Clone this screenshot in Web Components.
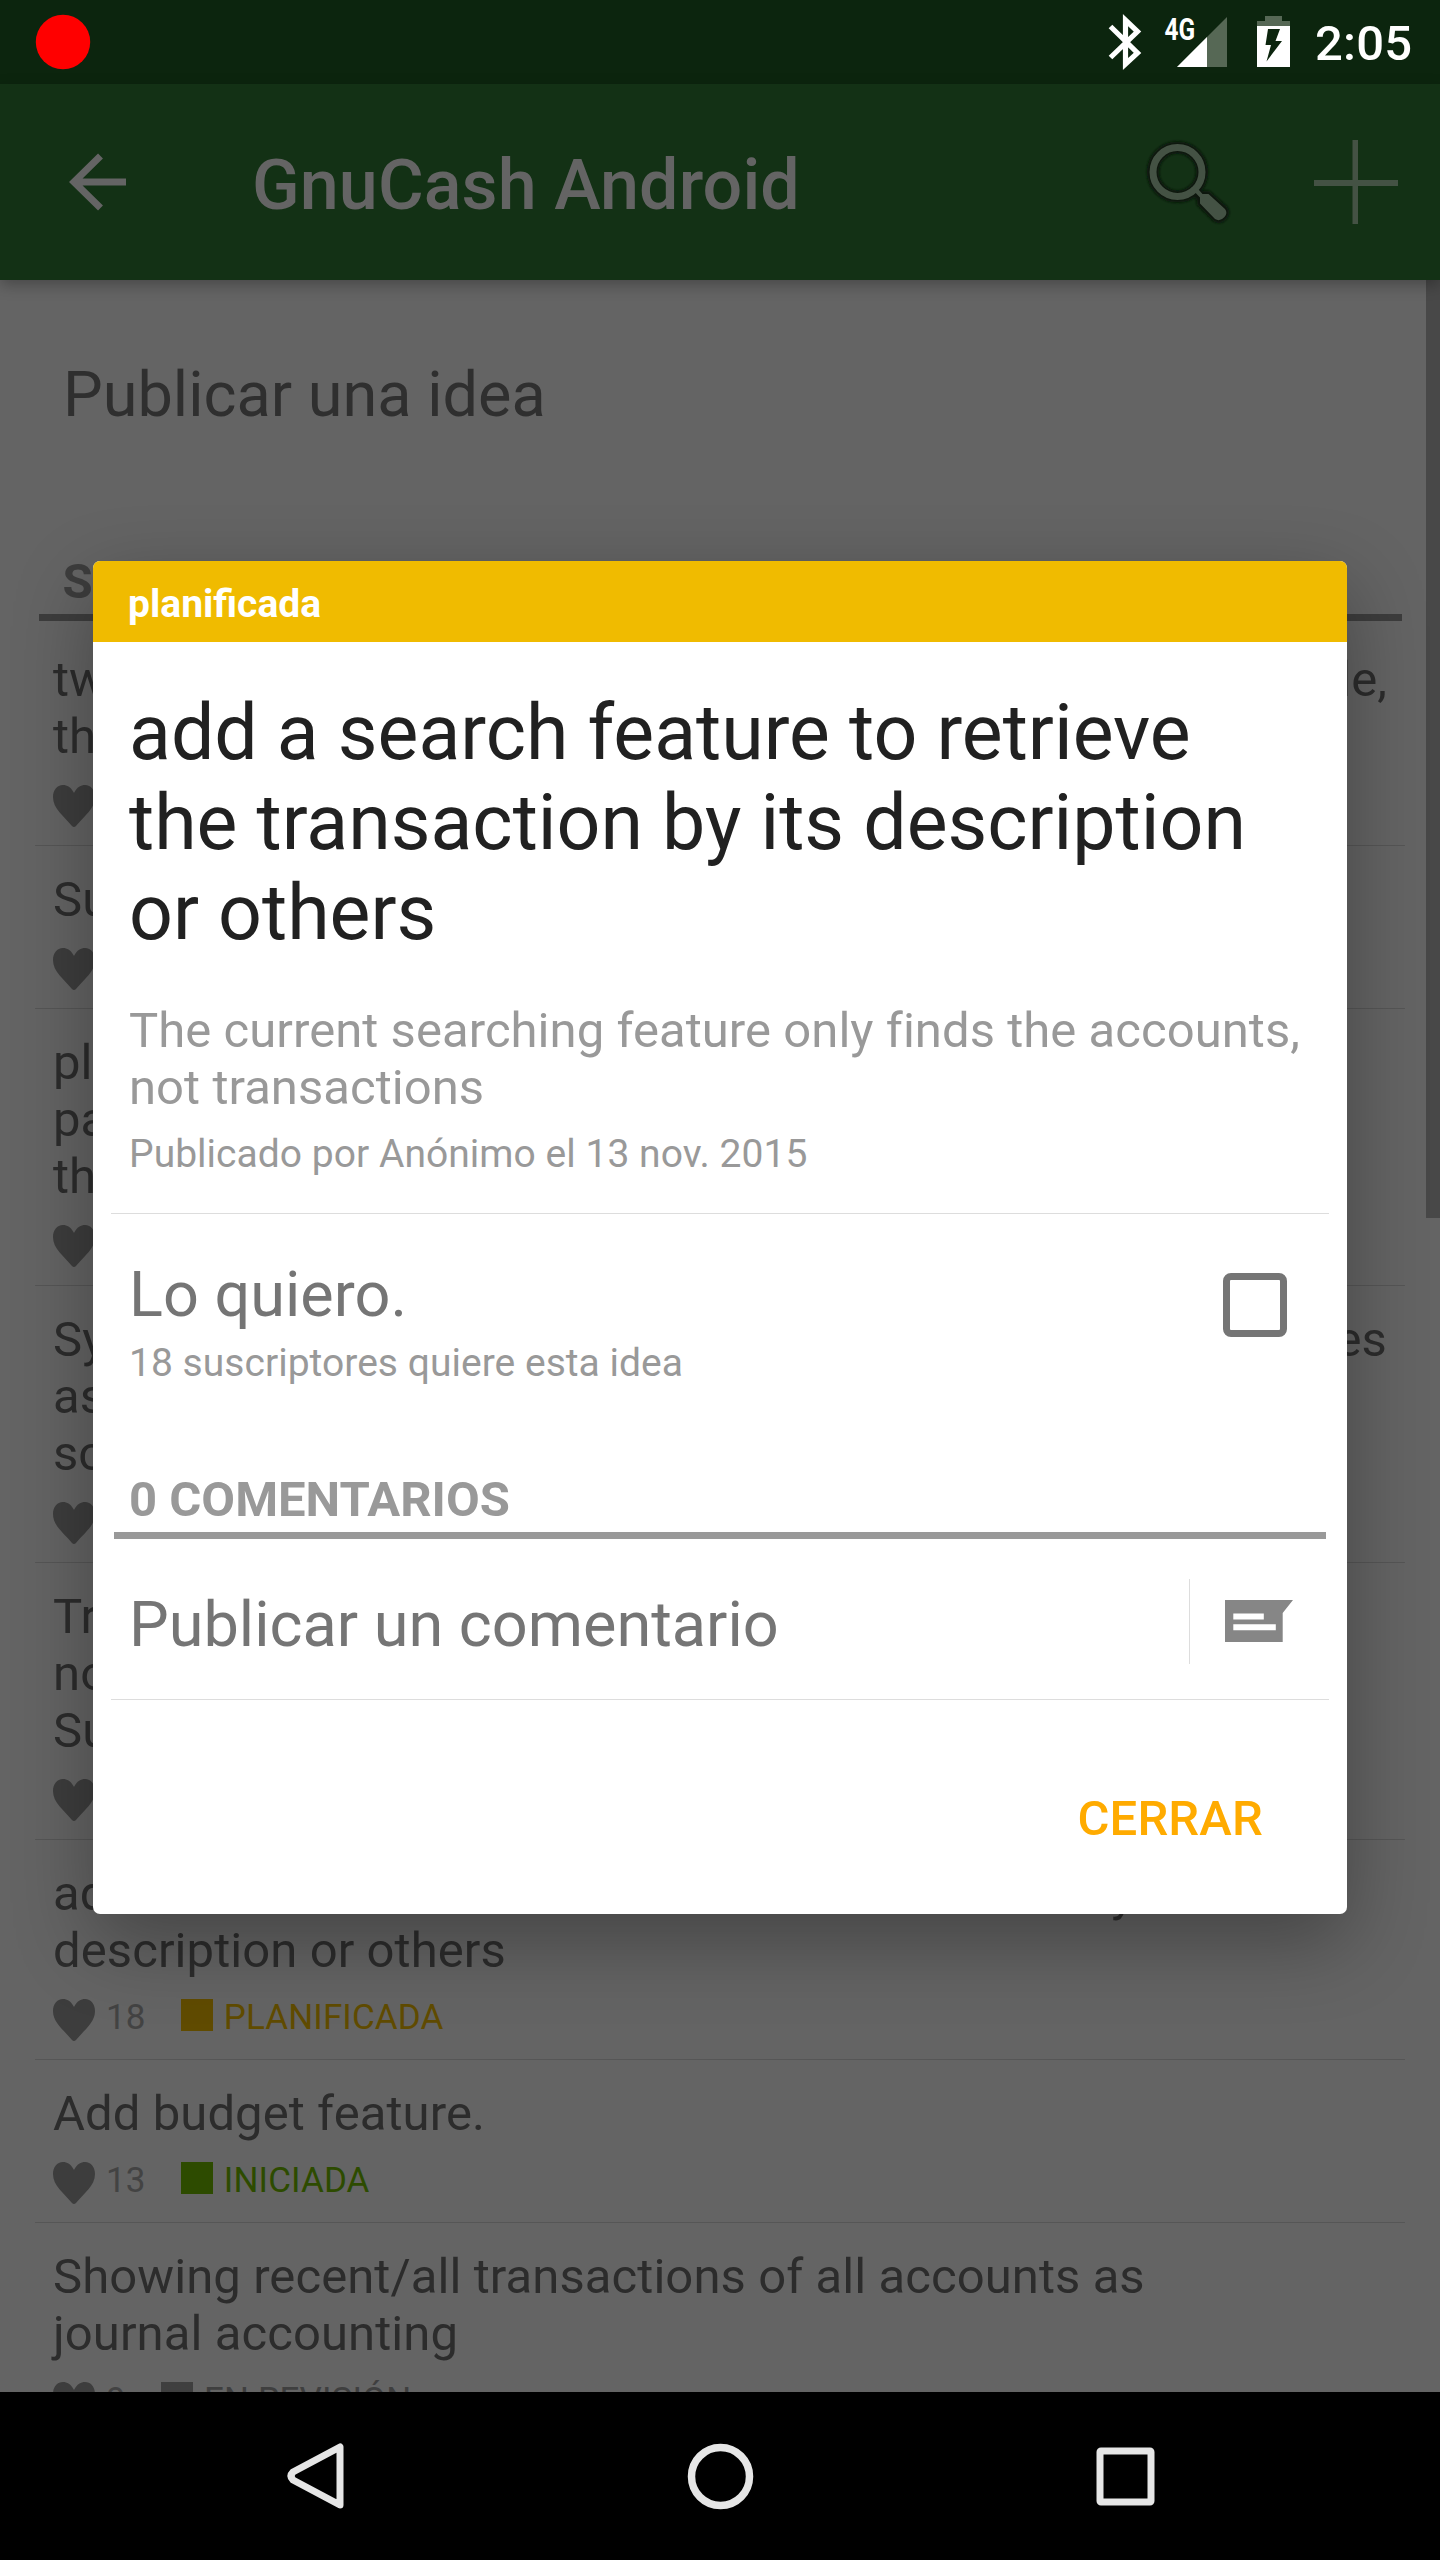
<!DOCTYPE html>
<html lang="es">
<head>
<meta charset="utf-8">
<title>GnuCash Android</title>
<style>
html,body{margin:0;padding:0;background:#646464}
body{width:1440px;height:2560px;overflow:hidden;font-family:Roboto,sans-serif}
</style>
</head>
<body>
<phone-screen>
  <status-bar slot="top" time="2:05"></status-bar>
  <app-bar slot="top">GnuCash Android</app-bar>
  <idea-forum>
    <span slot="publish">Publicar una idea</span>
    <span slot="heading">SUGERENCIAS</span>
    <idea-row votes="31" status="En revisión" color="#3f3f3f"><span>tweak the app to have a widget available,</span><br>that stays on the screen</idea-row>
    <idea-row votes="29" status="En revisión" color="#3f3f3f">Support for OFX</idea-row>
    <idea-row votes="25" status="En revisión" color="#3f3f3f">please make it<br>payable from<br>the main view</idea-row>
    <idea-row votes="22" status="En revisión" color="#3f3f3f"><span>Sync the accounts with several other devices</span><br>as well as<br>scheduled ones</idea-row>
    <idea-row votes="20" status="En revisión" color="#3f3f3f">Translate the<br>notes and<br>Support them</idea-row>
    <idea-row votes="18" status="Planificada" color="#604b00">add a search feature to retrieve the transaction by its<br>description or others</idea-row>
    <idea-row votes="13" status="Iniciada" color="#2d4b00">Add budget feature.</idea-row>
    <idea-row votes="9" status="En revisión" color="#3f3f3f">Showing recent/all transactions of all accounts as<br>journal accounting</idea-row>
  </idea-forum>
  <nav-bar slot="bottom"></nav-bar>
  <idea-dialog slot="overlay">
    <span slot="status">planificada</span>
    <span slot="title">add a search feature to retrieve<br>the transaction by its description<br>or others</span>
    <span slot="text">The current searching feature only finds the accounts,<br>not transactions</span>
    <span slot="author">Publicado por Anónimo el 13 nov. 2015</span>
    <span slot="want">Lo quiero.</span>
    <span slot="fans">18 suscriptores quiere esta idea</span>
    <span slot="count">0 COMENTARIOS</span>
    <span slot="comment">Publicar un comentario</span>
    <span slot="close">CERRAR</span>
  </idea-dialog>
</phone-screen>
<script>
const define = (name, html) => {
  const t = document.createElement('template');
  t.innerHTML = html;
  customElements.define(name, class extends HTMLElement {
    constructor() {
      super();
      this.attachShadow({mode: 'open'}).append(t.content.cloneNode(true));
    }
    connectedCallback() {
      this.shadowRoot.querySelectorAll('[data-attr]').forEach(e => {
        e.textContent = this.getAttribute(e.dataset.attr);
      });
      if (this.hasAttribute('color')) this.style.setProperty('--status', this.getAttribute('color'));
    }
  });
};

define('phone-screen', `<style>
:host{display:flex;flex-direction:column;position:relative;width:1440px;height:2560px;overflow:hidden;background:#646464}
main{flex:1;min-height:0;overflow:hidden;display:flex}
.over{position:absolute;inset:0;display:flex;justify-content:center;align-items:flex-start;padding-top:561px;box-sizing:border-box}
</style><slot name="top"></slot><main><slot></slot></main><slot name="bottom"></slot><div class="over"><slot name="overlay"></slot></div>`);

define('status-bar', `<style>
:host{display:flex;flex:none;height:84px;background:#0c250e;align-items:flex-start;justify-content:space-between}
svg{display:block}
.r{display:flex;height:84px}
.t{font:500 49px/84px Roboto;color:#fff;width:125px;padding-top:2px;letter-spacing:.2px}
.g{font:700 30.5px/30px Roboto;fill:#fff}
</style>
<svg width="200" height="84"><circle cx="63" cy="42" r="27.2" fill="#f00"/></svg>
<div class="r">
<svg width="210" height="84" viewBox="1105 0 210 84">
<path d="M1110.500 26.500L1137.500 53L1125.500 64V20L1137.500 31.500L1110.500 57.500" fill="none" stroke="#fff" stroke-width="5.200" stroke-linejoin="miter"/>
<text class="g" transform="translate(1164.500 39.500) scale(.8 1)">4G</text>
<path d="M1177 67L1227 17V67Z" fill="#566855"/><path d="M1177 67L1207 37V67Z" fill="#fff"/>
<path d="M1257 26V21H1265V16H1282V21H1290V26Z" fill="#566855"/>
<path d="M1257 26H1290V67H1257ZM1268 29L1265.500 45H1271L1266.500 61.500L1282 41H1275.500L1280 29Z" fill="#fff" fill-rule="evenodd"/>
</svg>
<div class="t" data-attr="time"></div></div>`);

define('app-bar', `<style>
:host{display:flex;flex:none;height:196px;background:#133115;align-items:center;box-shadow:0 5px 14px rgba(0,0,0,.28);position:relative}
h1{margin:0 auto 0 0;font:500 70px/82px Roboto;color:#646464;padding-top:5px;letter-spacing:.1px}
svg{display:block;flex:none}
</style>
<svg width="252" height="196" viewBox="0 84 252 196"><path d="M126 182H74M100.500 156L74 182L100.500 208" fill="none" stroke="#646464" stroke-width="7"/></svg>
<h1><slot></slot></h1>
<svg width="300" height="196" viewBox="1140 84 300 196">
<defs><filter id="soft" x="-20%" y="-20%" width="140%" height="140%"><feGaussianBlur stdDeviation="1"/></filter></defs>
<g stroke="#08190a" stroke-linejoin="round" filter="url(#soft)"><circle cx="1177.500" cy="172" r="24.500" fill="none" stroke-width="12.500"/>
<path d="M1193 191L1196 188L1201.500 193.500H1208L1225 208.500Q1228 213 1224.500 217Q1220 222 1215 219L1199.500 203.500V199Z" fill="#445244" stroke-width="6"/></g>
<circle cx="1177.500" cy="172" r="24.500" fill="none" stroke="#445244" stroke-width="7"/>
<path d="M1191 188L1195 185.500L1202.500 194H1208.500L1225 209Q1228 213 1224.500 217Q1220 222 1215 219L1200 203.500V197.500Z" fill="#445244"/>
<path d="M1352.500 140h5.500v40h40v6h-40v38h-5.500v-38h-38.500v-6h38.500z" fill="#445244"/>
</svg>`);

define('idea-forum', `<style>
:host{display:flex;flex:1;justify-content:space-between;align-items:flex-start}
.c{width:1370px;padding-left:35px;flex:none}
.p{font:400 63px/74px Roboto;color:#2f2f2f;padding:78px 0 0 28px}
.h{font:700 49px/57px Roboto;color:#3d3d3d;margin:121px 3px 5px 3.500px;padding:0 0 4px 24px;border-bottom:7px solid #3d3d3d}
.s{width:14px;height:938px;background:#484848}
</style><div class="c"><div class="p"><slot name="publish"></slot></div><div class="h"><slot name="heading"></slot></div><slot></slot></div><div class="s"></div>`);

define('idea-row', `<style>
:host{display:block;border-bottom:1px solid #565656;padding:25px 20px 18px 18px}
.t{font:400 49px/57px Roboto;color:#2c2c2c;white-space:nowrap;letter-spacing:.08px}
::slotted(span){display:inline-block;width:1334px;text-align-last:justify;vertical-align:top}
.m{display:flex;height:42px;margin-top:20px;font:400 35px/42px Roboto;color:#434343;letter-spacing:.1px}
svg{flex:none;margin-right:11px}
.n{margin-top:-2px}
i{width:32px;height:32px;background:var(--status);margin:0 11px 0 35.300px}
b{font-weight:400;text-transform:uppercase;color:var(--status);margin-top:-2px}
</style><div class="t"><slot></slot></div><div class="m">
<svg width="42" height="42" viewBox="0 0 42 42"><path d="M21 8C24 2 28 0 32 0C38 0 42 5 42 12C42 24 31 31 23 41Q21 43 19 41C11 31 0 24 0 12C0 5 4 0 10 0C14 0 18 2 21 8Z" fill="#3d3d3d"/></svg>
<span class="n" data-attr="votes"></span><i></i><b data-attr="status"></b></div>`);

define('idea-dialog', `<style>
:host{display:flex;flex-direction:column;width:1254px;height:1353px;background:#fff;border-radius:7px;overflow:hidden;box-shadow:0 27px 80px rgba(0,0,0,.32)}
div{white-space:nowrap}
.bar{height:81px;background:#f0bb00;color:#fff;font:700 39px/81px Roboto;padding:3px 35px 0;box-sizing:border-box}
.box{padding:46px 18px 0;display:flex;flex-direction:column}
.title{font:400 77px/90px Roboto;color:#212121;padding-left:18px}
.text{font:400 49px/57px Roboto;color:#999;padding:44px 0 16px 18px;letter-spacing:.05px}
.small{font:400 39px/45px Roboto;color:#999;letter-spacing:.03px}
.by{padding:0 0 36px 18px;border-bottom:1px solid #ddd}
.want{display:flex;justify-content:space-between;padding:44px 42px 0 18px}
.big{font:400 63px/74px Roboto;color:#757575}
.fans{margin-top:9px}
.check{width:64px;height:64px;box-sizing:border-box;border:7px solid #757575;border-radius:8px;margin-top:15px}
.count{font:700 49px/57px Roboto;color:#999;margin:85px 3px 0 3px;padding:0 0 4px 15px;border-bottom:7px solid #999}
.add{display:flex;justify-content:space-between;border-bottom:1px solid #ddd;height:160px}
.add .big{padding:49px 0 0 18px}
.icon{border-left:1px solid #ddd;height:85px;margin-top:40px;width:139px}
.close{font:500 49px/57px Roboto;color:#ffab00;text-align:right;padding:90px 66px 0;letter-spacing:.15px}
svg{display:block}
</style>
<div class="bar"><slot name="status"></slot></div>
<div class="box">
<div class="title"><slot name="title"></slot></div>
<div class="text"><slot name="text"></slot></div>
<div class="small by"><slot name="author"></slot></div>
<div class="want"><div><div class="big"><slot name="want"></slot></div><div class="small fans"><slot name="fans"></slot></div></div><div class="check"></div></div>
<div class="count"><slot name="count"></slot></div>
<div class="add"><div class="big"><slot name="comment"></slot></div><div class="icon"><svg width="139" height="85" viewBox="1190 1579 139 85"><path d="M1225 1600H1293L1282.700 1613V1642H1225Z" fill="#868686"/><path d="M1233.300 1613.500h30.500v6h-30.500zM1233.300 1624.300h42.500v6h-42.500z" fill="#fff"/></svg></div></div>
<div class="close"><slot name="close"></slot></div>
</div>`);

define('nav-bar', `<style>
:host{display:flex;flex:none;height:168px;background:#000;justify-content:center;position:relative}
svg{display:block}
</style><svg width="1440" height="168" viewBox="0 2392 1440 168" fill="none" stroke="#e6e6e6" stroke-linejoin="round">
<path d="M340 2447V2505L293 2480Q289 2476 293 2472Z" stroke-width="7"/>
<circle cx="720.500" cy="2476.500" r="29" stroke-width="7.500"/>
<rect x="1100" y="2451" width="51" height="51" rx="1" stroke-width="7"/></svg>`);
</script>
</body>
</html>
